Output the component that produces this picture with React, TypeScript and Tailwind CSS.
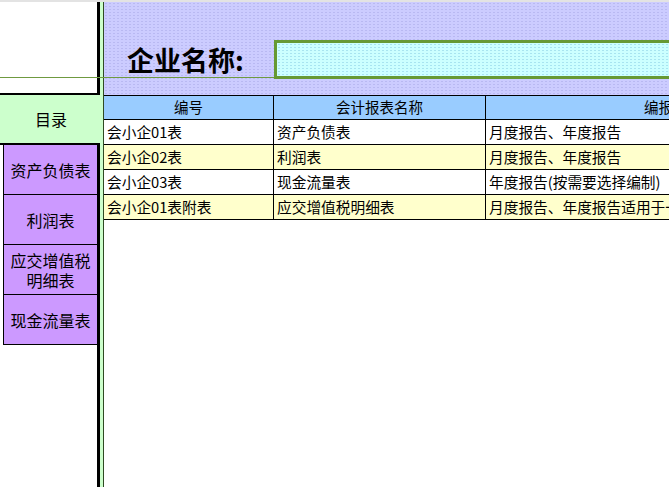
import React from "react";

const rows = [
  { code: "会小企01表", name: "资产负债表", note: "月度报告、年度报告", bg: "bg-white" },
  { code: "会小企02表", name: "利润表", note: "月度报告、年度报告", bg: "bg-[#ffffcc]" },
  { code: "会小企03表", name: "现金流量表", note: "年度报告(按需要选择编制)", bg: "bg-white" },
  { code: "会小企01表附表", name: "应交增值税明细表", note: "月度报告、年度报告适用于一般纳税人", bg: "bg-[#ffffcc]" },
];

const tabs = ["资产负债表", "利润表", "应交增值税\n明细表", "现金流量表"];

const App = () => {
  return (
    <div className="relative w-[669px] h-[487px] overflow-hidden bg-white flex flex-col font-['Noto_Sans_CJK_SC',sans-serif] text-black">
      {/* top strip */}
      <div className="h-[2px] shrink-0 bg-[#e3e3e3]" />

      <div className="flex flex-1 min-h-0">
        {/* SIDEBAR */}
        <aside className="w-[104px] shrink-0 flex flex-col bg-[#ccffcc] border-r border-[#2f4a22]">
          <div className="h-[93px] w-[100px] shrink-0 bg-white border-r-[3px] border-b-[2px] border-black" />
          <div className="h-[50px] w-[100px] shrink-0 border-b-[2px] border-black flex items-center justify-center text-[16px] pl-[2px]">
            目录
          </div>
          <div className="flex-1 w-[100px] bg-white pl-[3px] border-r-[3px] border-black">
            {tabs.map((t) => (
              <div
                key={t}
                className="h-[50px] bg-[#cc99ff] border-l border-b border-black flex items-center justify-center text-center text-[16px] leading-[20px] whitespace-pre-line"
              >
                {t}
              </div>
            ))}
          </div>
        </aside>

        {/* MAIN */}
        <main className="flex-1 min-w-0 flex flex-col overflow-hidden">
          {/* HEADER */}
          <div className="h-[93px] shrink-0 bg-[#ccccff] bg-[radial-gradient(circle,#b9b9f2_0.7px,transparent_0.9px)] bg-[length:4px_3px] flex items-start pt-[38px] pl-[23px]">
            <div className="w-[147px] shrink-0 h-[39px] flex items-center text-[27px] font-bold leading-none tracking-[0px]">
              企业名称:
            </div>
            <div className="w-[420px] shrink-0 h-[39px] border-[3px] border-[#669933] bg-[#ccffff] bg-[radial-gradient(circle,#a8e4f0_0.7px,transparent_0.9px)] bg-[length:4px_3px]" />
          </div>

          {/* TABLE */}
          <div className="flex h-[25px] shrink-0 border-t border-b border-black bg-[#99ccff] text-[14.5px] leading-none">
            <div className="w-[170px] shrink-0 border-r border-black flex items-center justify-center">编号</div>
            <div className="w-[212px] shrink-0 border-r border-black flex items-center justify-center">会计报表名称</div>
            <div className="w-[374px] shrink-0 flex items-center justify-center">编报时间</div>
          </div>
          {rows.map((r) => (
            <div key={r.code} className={`flex h-[25px] shrink-0 border-b border-black text-[14.7px] leading-none ${r.bg}`}>
              <div className="w-[170px] shrink-0 border-r border-black flex items-center pl-[3px]">{r.code}</div>
              <div className="w-[212px] shrink-0 border-r border-black flex items-center pl-[3px]">{r.name}</div>
              <div className="w-[374px] shrink-0 flex items-center pl-[3px] whitespace-nowrap">{r.note}</div>
            </div>
          ))}
          <div className="flex-1 bg-white" />
        </main>
      </div>

      {/* frozen-pane guide line */}
      <div className="absolute left-0 top-[77px] w-[274px] h-px bg-[#6f9a40]" />
    </div>
  );
};

export default App;
